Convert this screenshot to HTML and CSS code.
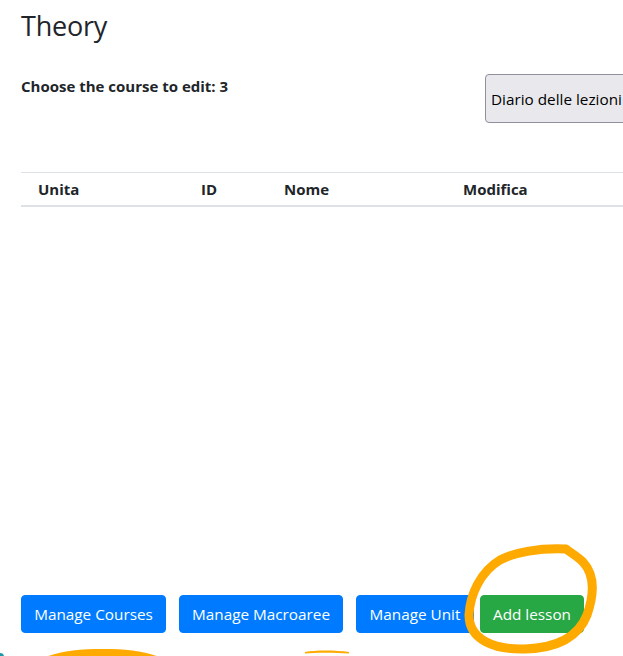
FILE: index.html
```html
<!DOCTYPE html>
<html lang="it">
<head>
<meta charset="utf-8">
<title>Theory</title>
<link rel="stylesheet" href="styles.css">
</head>
<body>
<div class="page">
  <h3 class="title">Theory</h3>
  <div class="course-row">
    <div class="course-label">Choose the course to edit: 3</div>
    <button class="btn-native">Diario delle lezioni</button>
  </div>
  <div class="table">
    <div class="thead">
      <div class="th th-unita">Unita</div>
      <div class="th th-id">ID</div>
      <div class="th th-nome">Nome</div>
      <div class="th th-mod">Modifica</div>
    </div>
  </div>
  <div class="actions">
    <button class="btn btn-primary btn-courses">Manage Courses</button>
    <button class="btn btn-primary btn-macro">Manage Macroaree</button>
    <button class="btn btn-primary btn-unit">Manage Unit</button>
    <button class="btn btn-success btn-lesson">Add lesson</button>
  </div>
</div>
<svg class="annotation" width="623" height="656" viewBox="0 0 623 656" aria-hidden="true">
  <path d="M 565 549 C 540 548 515 552 500 560 C 480 572 470 595 469 615 C 469 640 495 650 525 649 C 555 648 578 638 587 615 C 594 595 595 575 583 562 C 577 556 571 553 566 549" fill="none" stroke="#ffaa00" stroke-width="9" stroke-linecap="round" stroke-linejoin="round"/>
  <path d="M 46 657 C 60 651 80 649 103 649 C 125 649 145 651 159 657 Z" fill="#ffaa00"/>
  <path d="M 305 652 C 315 650 335 650 349 652 L 349 653.5 C 335 652.5 315 652.5 305 653.5 Z" fill="#ffaa00"/>
  <circle cx="0" cy="657" r="4" fill="#1b9aa6"/>
</svg>
</body>
</html>
```
FILE: styles.css
```css
html, body {
  margin: 0;
  padding: 0;
  overflow: hidden;
  background: #ffffff;
}

body {
  width: 623px;
  height: 656px;
  position: relative;
  font-family: "Open Sans", "Noto Sans", "Liberation Sans", sans-serif;
  color: #212529;
}

.page {
  box-sizing: border-box;
  width: 623px;
  height: 656px;
  padding: 0 0 0 21px;
  overflow: hidden;
}

.title {
  margin: 0;
  padding-top: 8px;
  font-size: 27px;
  font-weight: 400;
  line-height: 36px;
  letter-spacing: -0.2px;
}

.course-row {
  display: flex;
  align-items: flex-start;
  margin-top: 30px;
}

.course-label {
  width: 464px;
  flex: 0 0 auto;
  font-size: 15px;
  font-weight: 700;
  line-height: 22px;
  padding-top: 1px;
}

.btn-native {
  flex: 0 0 auto;
  height: 49px;
  padding: 0 5px;
  font-family: "Open Sans", "Noto Sans", sans-serif;
  font-size: 15.3px;
  color: #000;
  background: #e9e9ed;
  border: 1px solid #8f8f9d;
  border-radius: 4px;
}

.table {
  margin-top: 49px;
  height: 423px;
}

.thead {
  display: flex;
  border-top: 1px solid #dee2e6;
  border-bottom: 2px solid #dee2e6;
  height: 32px;
  align-items: center;
}

.th {
  font-size: 15px;
  font-weight: 700;
  line-height: 22px;
  flex: 0 0 auto;
}

.th-unita { width: 163px; padding-left: 17px; }
.th-id    { width: 83px; }
.th-nome  { width: 179px; }
.th-mod   { width: 120px; }

.actions {
  display: flex;
  align-items: center;
}

.btn {
  height: 38px;
  padding: 0;
  font-family: "Open Sans", "Noto Sans", sans-serif;
  font-size: 15.3px;
  line-height: 24px;
  color: #ffffff;
  border: 1px solid transparent;
  border-radius: 4px;
  text-align: center;
  flex: 0 0 auto;
}

.btn-primary {
  background: #007bff;
  border-color: #007bff;
}

.btn-success {
  background: #28a745;
  border-color: #28a745;
}

.btn-courses { width: 145px; margin-right: 13px; }
.btn-macro   { width: 164px; margin-right: 13px; }
.btn-unit    { width: 118px; margin-right: 6px; }
.btn-lesson  { width: 104px; }

.annotation {
  position: absolute;
  left: 0;
  top: 0;
  pointer-events: none;
}
```
